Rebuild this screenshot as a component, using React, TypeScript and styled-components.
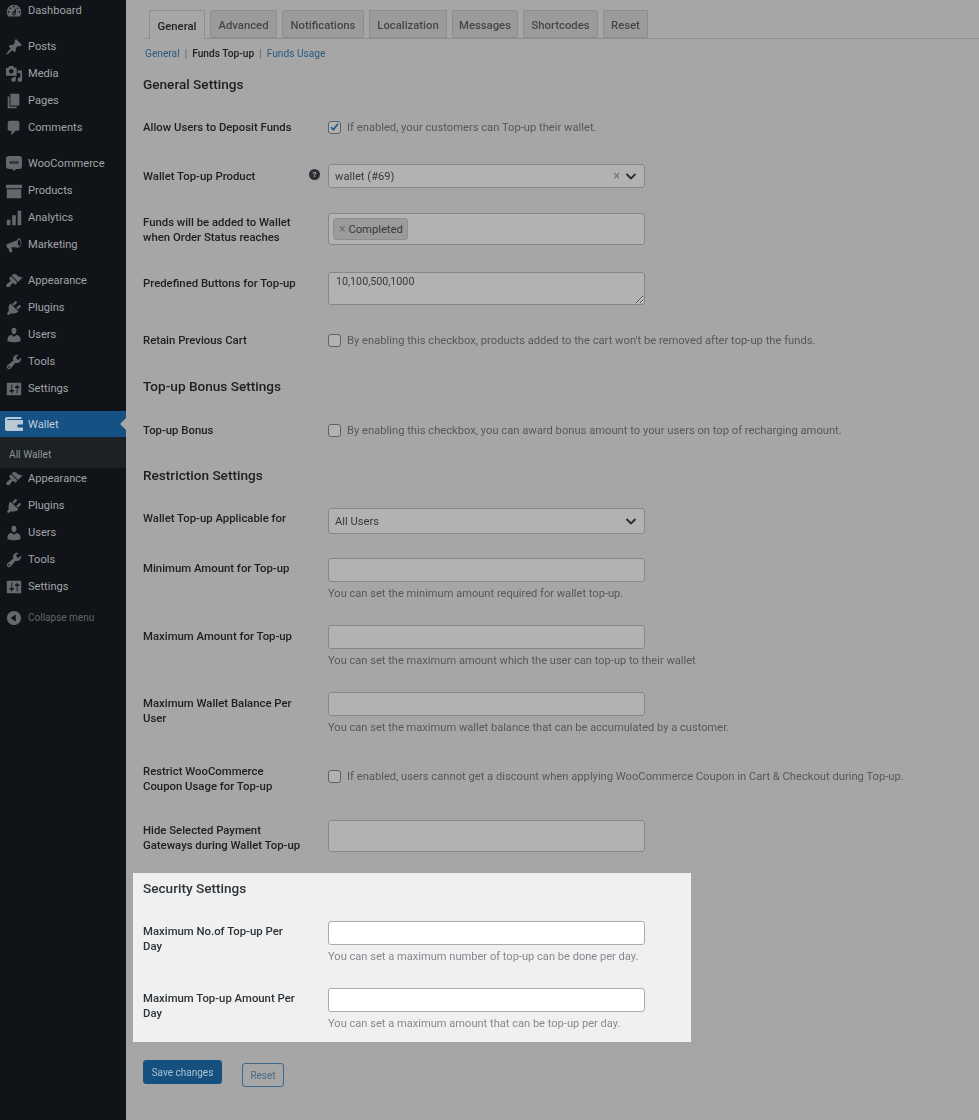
import React from "react";
import styled, { createGlobalStyle } from "styled-components";

const Global = createGlobalStyle`
  html, body { margin: 0; padding: 0; background: #a6a6a6; }
  body { font-family: Roboto, "Noto Sans", sans-serif; font-size: 12px; }
  * { box-sizing: border-box; }
`;

const Shell = styled.div`
  display: flex;
  width: 979px;
  height: 1120px;
  overflow: hidden;
  filter: blur(0.35px);
`;

const Sidebar = styled.nav`
  width: 126px;
  flex: none;
  background: #101317;
  overflow: hidden;
`;

const MenuList = styled.ul`
  list-style: none;
  margin: -3px 0 0;
  padding: 0;
`;

const Item = styled.li<{ $gap?: boolean; $active?: boolean }>`
  position: relative;
  display: flex;
  align-items: center;
  gap: 5px;
  height: ${(p) => (p.$active ? 26 : 27)}px;
  margin-top: ${(p) => (p.$gap ? 9 : 0)}px;
  padding-left: 5px;
  color: ${(p) => (p.$active ? "#c2d0da" : "#a0a4a8")};
  background: ${(p) => (p.$active ? "#155184" : "transparent")};
  font-size: 11.1px;
  white-space: nowrap;
`;

const Notch = styled.span`
  position: absolute;
  right: 0;
  top: 7px;
  width: 0;
  height: 0;
  border: 6px solid transparent;
  border-left-width: 0;
  border-right-color: #a6a6a6;
`;

const IconBox = styled.svg<{ $light?: boolean }>`
  width: ${(p) => (p.$light ? 20 : 18)}px;
  height: ${(p) => (p.$light ? 20 : 18)}px;
  margin: ${(p) => (p.$light ? "0 -1px" : "0")};
  flex: none;
  fill: ${(p) => (p.$light ? "#b9c8d4" : "#64686c")};
`;

const Submenu = styled.div`
  height: 31px;
  margin-bottom: -3px;
  padding: 3px 0 0 9px;
  display: flex;
  align-items: center;
  background: #1b2125;
  color: #8f9498;
  font-size: 10.2px;
`;

const Collapse = styled(Item)`
  color: #62666a;
  font-size: 10px;
  margin-top: 4px;
`;

const WooIcon = styled.span`
  position: relative;
  width: 16px;
  height: 13px;
  margin: -2px 1px 0;
  border-radius: 3px;
  background: #64686c;
  color: #14171a;
  font-size: 5px;
  font-weight: 700;
  line-height: 13px;
  text-align: center;
  flex: none;
  &::after {
    content: "";
    position: absolute;
    left: 6px;
    bottom: -2px;
    border: 2px solid transparent;
    border-bottom-width: 0;
    border-top-color: #64686c;
  }
`;

const Main = styled.main`
  flex: 1;
  min-width: 0;
  padding: 10px 0 0 17px;
  --text: #1c1e20;
  --muted: #55585c;
  --field: #b2b2b2;
  --line: #84878b;
  --value: #36393d;
`;

const Tabs = styled.div`
  display: flex;
  gap: 5px;
  padding-left: 6px;
  height: 29px;
  border-bottom: 1px solid #8e8e8e;
`;

const Tab = styled.div<{ $active?: boolean; $w: number }>`
  width: ${(p) => p.$w}px;
  height: ${(p) => (p.$active ? 29 : 28)}px;
  display: flex;
  align-items: center;
  justify-content: center;
  padding-top: 2px;
  border: 1px solid #8e8e8e;
  border-bottom: ${(p) => (p.$active ? "none" : "1px solid #8e8e8e")};
  background: ${(p) => (p.$active ? "#a6a6a6" : "#9b9b9b")};
  color: ${(p) => (p.$active ? "#1c1e20" : "#44474a")};
  font-size: 11.3px;
  font-weight: 500;
`;

const SubNav = styled.div`
  display: flex;
  gap: 5px;
  height: 18px;
  margin-top: 5px;
  padding-left: 2px;
  align-items: center;
  font-size: 10.2px;
  color: #5c5f63;
`;

const NavLink = styled.span<{ $current?: boolean }>`
  color: ${(p) => (p.$current ? "#1c1e20" : "#2b5a80")};
  font-weight: ${(p) => (p.$current ? 500 : 400)};
`;

const Heading = styled.h2<{ $top: number }>`
  margin: ${(p) => p.$top}px 0 0;
  height: 20px;
  line-height: 19px;
  font-size: 13.6px;
  font-weight: 500;
  color: var(--text);
`;

const Row = styled.div<{ $top: number }>`
  display: grid;
  grid-template-columns: 185px 317px;
  margin-top: ${(p) => p.$top}px;
`;

const Label = styled.label<{ $pad?: number }>`
  position: relative;
  padding-top: ${(p) => p.$pad ?? 4}px;
  padding-right: 26px;
  font-size: 11.35px;
  line-height: 15px;
  font-weight: 500;
  color: var(--text);
`;

const Help = styled.span`
  position: absolute;
  right: 8px;
  top: 5px;
  width: 11px;
  height: 11px;
  border-radius: 50%;
  background: #2c2f33;
  color: #b2b2b2;
  font-size: 8px;
  font-weight: 700;
  line-height: 11px;
  text-align: center;
`;

const CheckLine = styled.div<{ $drop?: number }>`
  display: flex;
  align-items: center;
  gap: 6px;
  height: 20px;
  margin-top: ${(p) => p.$drop ?? 0}px;
  color: var(--muted);
  font-size: 11.2px;
  white-space: nowrap;
`;

const Box = styled.span`
  width: 13px;
  height: 13px;
  flex: none;
  border: 1px solid #5e6266;
  border-radius: 3px;
  background: var(--field);
  display: flex;
  align-items: center;
  justify-content: center;
`;

const Field = styled.div<{ $h: number }>`
  height: ${(p) => p.$h}px;
  display: flex;
  align-items: center;
  gap: 4px;
  padding: 0 6px;
  border: 1px solid var(--line);
  border-radius: 3px;
  background: var(--field);
  color: var(--value);
  font-size: 11.2px;
`;

const Value = styled.span`
  flex: 1;
`;

const ClearMark = styled.span`
  color: #6b6e72;
  font-size: 12px;
  line-height: 1;
`;

const Token = styled.span`
  display: flex;
  align-items: center;
  gap: 3px;
  height: 22px;
  margin-left: -2px;
  padding: 0 4px 0 5px;
  border: 1px solid #8c8f92;
  border-radius: 3px;
  background: #9b9b9b;
  color: var(--value);
  font-size: 11.2px;
`;

const TextInput = styled.input`
  display: block;
  width: 100%;
  height: 24px;
  padding: 0 7px;
  border: 1px solid var(--line);
  border-radius: 3px;
  background: var(--field);
  font: inherit;
  font-size: 11.2px;
  color: var(--value);
  outline: none;
`;

const TextArea = styled.textarea`
  display: block;
  width: 100%;
  height: 33px;
  padding: 1px 7px 0;
  border: 1px solid var(--line);
  border-radius: 3px;
  background: var(--field);
  font: inherit;
  font-size: 10.7px;
  line-height: 16px;
  color: var(--value);
  outline: none;
`;

const Desc = styled.p`
  margin: 3px 0 0;
  height: 18px;
  line-height: 18px;
  font-size: 11.1px;
  color: var(--muted);
  white-space: nowrap;
`;

const Highlight = styled.section`
  width: 558px;
  height: 169px;
  margin: 20px 0 0 -10px;
  padding: 6px 0 0 10px;
  background: #f0f0f1;
  --text: #2c3338;
  --muted: #85898e;
  --field: #ffffff;
  --line: #a9abae;
  --value: #2c3338;
`;

const Actions = styled.div`
  display: flex;
  align-items: flex-start;
  gap: 20px;
  margin-top: 18px;
`;

const SaveButton = styled.button`
  width: 79px;
  height: 24px;
  padding: 0;
  border: 1px solid #16507e;
  border-radius: 3px;
  background: #16507e;
  color: #a9c1d3;
  font: inherit;
  font-size: 10px;
`;

const ResetButton = styled.button`
  width: 42px;
  height: 24px;
  margin-top: 3px;
  padding: 0;
  border: 1px solid #3d6a8c;
  border-radius: 3px;
  background: transparent;
  color: #486a85;
  font: inherit;
  font-size: 10px;
`;

const D = {
  dashboard: "M3.76 16h12.48c1.1-1.37 1.76-3.11 1.76-5 0-4.42-3.58-8-8-8s-8 3.58-8 8c0 1.89.66 3.63 1.76 5zM10 4c.55 0 1 .45 1 1s-.45 1-1 1-1-.45-1-1 .45-1 1-1zM6 6c.55 0 1 .45 1 1s-.45 1-1 1-1-.45-1-1 .45-1 1-1zm8 0c.55 0 1 .45 1 1s-.45 1-1 1-1-.45-1-1 .45-1 1-1zm-5.37 5.55L12 7v6c0 1.1-.9 2-2 2s-2-.9-2-2c0-.57.24-1.08.63-1.45zM4 10c.55 0 1 .45 1 1s-.45 1-1 1-1-.45-1-1 .45-1 1-1zm12 0c.55 0 1 .45 1 1s-.45 1-1 1-1-.45-1-1 .45-1 1-1zm-5 3c0-.55-.45-1-1-1s-1 .45-1 1 .45 1 1 1 1-.45 1-1z",
  post: "M10.44 3.02l1.82-1.82 6.36 6.35-1.83 1.82c-1.05-.68-2.48-.57-3.41.36l-.75.75c-.92.93-1.04 2.35-.35 3.41l-1.83 1.82-2.41-2.41-2.8 2.79c-.42.42-3.38 2.71-3.8 2.29s1.86-3.39 2.28-3.81l2.79-2.79L4.1 9.36l1.83-1.82c1.05.69 2.48.57 3.4-.36l.75-.75c.93-.92 1.05-2.35.36-3.41z",
  media: "M13 11V4c0-.55-.45-1-1-1h-1.67L9 1H5L3.67 3H2c-.55 0-1 .45-1 1v7c0 .55.45 1 1 1h10c.55 0 1-.45 1-1zM7 4.5c1.38 0 2.5 1.12 2.5 2.5S8.38 9.5 7 9.5 4.5 8.38 4.5 7 5.62 4.5 7 4.5zM14 6h5v10.5c0 1.38-1.12 2.5-2.5 2.5S14 17.88 14 16.5s1.12-2.5 2.5-2.5c.17 0 .34.02.5.05V9h-3V6zm-4 8.05V13h2v3.5c0 1.38-1.12 2.5-2.5 2.5S7 17.88 7 16.5 8.12 14 9.5 14c.17 0 .34.02.5.05z",
  page: "M6 15V2h10v13H6zm-1 1h8v2H3V5h2v11z",
  comment: "M5 2h9c1.1 0 2 .9 2 2v7c0 1.1-.9 2-2 2h-2l-5 5v-5H5c-1.1 0-2-.9-2-2V4c0-1.1.9-2 2-2z",
  products: "M19 3H1v4h18V3zM2 8h16v10H2V8zm4 3h8v2H6v-2z",
  analytics: "M18 18V2h-4v16h4zm-6 0V7H8v11h4zm-6 0v-6H2v6h4z",
  marketing: "M16 2.5c1.7 1 2.6 3.6 2.2 6.3-.3 2-1.5 3.5-2.9 4L14 13l-1-.1c-1.8-.6-4.3-.6-6 0l1.2 4.1c.1.4-.1.8-.5.9l-1.7.5c-.4.1-.8-.1-.9-.5L3.6 13.2l-1 .3-1.2-4 12-4.8C13.8 3.4 15 2 16 2.5zm-.4 2c-.9.1-1.5 1.7-1.3 3.5.2 1.8 1 3.2 1.9 3 .9-.1 1.5-1.7 1.3-3.5-.2-1.8-1-3.1-1.9-3z",
  appearance: "M14.48 11.06L7.41 3.99l1.5-1.5c.5-.56 2.3-.47 3.51.32 1.21.8 1.43 1.28 2.91 2.1 1.18.64 2.45 1.26 4.45.85zm-.71.71L6.7 4.7 4.93 6.47c-.39.39-.39 1.02 0 1.41l1.06 1.06c.39.39.39 1.03 0 1.42-.6.6-1.43 1.11-2.21 1.69-.35.26-.7.53-1.01.84C1.43 13.71.96 15.42 1.91 16.36c.95.95 2.66.47 3.67-.55.31-.31.58-.66.85-1.01.58-.78 1.09-1.61 1.69-2.21.39-.39 1.02-.39 1.41 0l1.06 1.06c.39.39 1.02.39 1.41 0z",
  plugins: "M13.11 4.36L9.87 7.6 8 5.73l3.24-3.24c.35-.34 1.05-.2 1.56.32.52.51.66 1.21.31 1.55zm-8 1.77l.91-1.12 9.01 9.01-1.19.84c-.71.71-2.63 1.16-3.82 1.16H6.14L4.9 17.26c-.59.59-1.54.59-2.12 0-.59-.58-.59-1.53 0-2.12l1.24-1.24v-3.88c0-1.13.4-3.19 1.09-3.89zm7.26 3.97l3.24-3.24c.34-.35 1.04-.21 1.55.31.52.51.66 1.21.31 1.55l-3.24 3.25z",
  users: "M10 9.25c-2.27 0-2.73-3.44-2.73-3.44C7 4.02 7.82 2 9.97 2c2.16 0 2.98 2.02 2.71 3.81 0 0-.41 3.44-2.68 3.44zm0 2.57L12.72 10c2.39 0 4.52 2.33 4.52 4.53v2.49s-3.65 1.13-7.24 1.13c-3.65 0-7.24-1.13-7.24-1.13v-2.49c0-2.25 1.94-4.48 4.47-4.48z",
  tools: "M16.68 9.77c-1.34 1.34-3.3 1.67-4.95.99l-5.41 6.52c-.99.99-2.59.99-3.58 0s-.99-2.59 0-3.57l6.52-5.42c-.68-1.65-.35-3.61.99-4.95 1.28-1.28 3.12-1.62 4.72-1.06l-2.89 2.89 2.82 2.82 2.86-2.87c.53 1.58.18 3.39-1.08 4.65zM3.81 16.21c.4.39 1.04.39 1.43 0 .4-.4.4-1.04 0-1.43-.39-.4-1.03-.4-1.43 0-.39.39-.39 1.03 0 1.43z",
  settings: "M18 16V4c0-.55-.45-1-1-1H3c-.55 0-1 .45-1 1v12c0 .55.45 1 1 1h14c.55 0 1-.45 1-1zM8 11h1c.55 0 1 .45 1 1s-.45 1-1 1H8v1.5c0 .28-.22.5-.5.5s-.5-.22-.5-.5V13H6c-.55 0-1-.45-1-1s.45-1 1-1h1V5.5c0-.28.22-.5.5-.5s.5.22.5.5V11zm5-2h-1c-.55 0-1-.45-1-1s.45-1 1-1h1V5.5c0-.28.22-.5.5-.5s.5.22.5.5V7h1c.55 0 1 .45 1 1s-.45 1-1 1h-1v5.5c0 .28-.22.5-.5.5s-.5-.22-.5-.5V9z",
  wallet: "M3 3h13.5c.6 0 1 .4 1 1v1H3.5c-.5 0-.5.9 0 .9H18c.6 0 1 .4 1 1V16c0 .6-.4 1-1 1H3c-1.1 0-2-.9-2-2V5c0-1.1.9-2 2-2zm11 7.5c-.3 0-.5.2-.5.5v2c0 .3.2.5.5.5h5v-3h-5z",
  collapse: "M10 2.16c4.33 0 7.84 3.51 7.84 7.84s-3.51 7.84-7.84 7.84S2.16 14.33 2.16 10 5.71 2.16 10 2.16zm2 11.72V6.12L6.18 9.97z",
};

const Icon = ({ d, light }: { d: string; light?: boolean }) => (
  <IconBox viewBox="0 0 20 20" $light={light}>
    <path d={d} />
  </IconBox>
);

const Chevron = () => (
  <svg width="14" height="14" viewBox="0 0 14 14" fill="none" stroke="#2a2d30" strokeWidth="1.8">
    <path d="M2.5 5l4.5 4.5L11.5 5" />
  </svg>
);

const Check = () => (
  <svg width="12" height="12" viewBox="0 0 12 12" fill="none" stroke="#1c5a8a" strokeWidth="1.8">
    <path d="M2.2 6.2l2.6 2.7 5-6.4" />
  </svg>
);

const tabs: [string, number][] = [
  ["General", 56],
  ["Advanced", 67],
  ["Notifications", 82],
  ["Localization", 78],
  ["Messages", 66],
  ["Shortcodes", 75],
  ["Reset", 45],
];

const lowerMenu: [string, string][] = [
  ["Appearance", D.appearance],
  ["Plugins", D.plugins],
  ["Users", D.users],
  ["Tools", D.tools],
  ["Settings", D.settings],
];

export default function App() {
  return (
    <>
      <Global />
      <Shell>
        <Sidebar>
          <MenuList>
            <Item><Icon d={D.dashboard} />Dashboard</Item>
            <Item $gap><Icon d={D.post} />Posts</Item>
            <Item><Icon d={D.media} />Media</Item>
            <Item><Icon d={D.page} />Pages</Item>
            <Item><Icon d={D.comment} />Comments</Item>
            <Item $gap><WooIcon>woo</WooIcon>WooCommerce</Item>
            <Item><Icon d={D.products} />Products</Item>
            <Item><Icon d={D.analytics} />Analytics</Item>
            <Item><Icon d={D.marketing} />Marketing</Item>
            {lowerMenu.map(([name, d], i) => (
              <Item key={name} $gap={i === 0}><Icon d={d} />{name}</Item>
            ))}
            <Item $gap $active><Icon d={D.wallet} light />Wallet<Notch /></Item>
            <Submenu>All Wallet</Submenu>
            {lowerMenu.map(([name, d]) => (
              <Item key={name + "2"}><Icon d={d} />{name}</Item>
            ))}
            <Collapse><Icon d={D.collapse} />Collapse menu</Collapse>
          </MenuList>
        </Sidebar>
        <Main>
          <Tabs>
            {tabs.map(([name, w], i) => (
              <Tab key={name} $w={w} $active={i === 0}>{name}</Tab>
            ))}
          </Tabs>
          <SubNav>
            <NavLink>General</NavLink>|<NavLink $current>Funds Top-up</NavLink>|<NavLink>Funds Usage</NavLink>
          </SubNav>

          <Heading $top={13}>General Settings</Heading>
          <Row $top={22}>
            <Label $pad={3}>Allow Users to Deposit Funds</Label>
            <CheckLine><Box><Check /></Box>If enabled, your customers can Top-up their wallet.</CheckLine>
          </Row>
          <Row $top={27}>
            <Label $pad={5}>Wallet Top-up Product<Help>?</Help></Label>
            <Field $h={24}><Value>wallet (#69)</Value><ClearMark>×</ClearMark><Chevron /></Field>
          </Row>
          <Row $top={25}>
            <Label $pad={2}>Funds will be added to Wallet when Order Status reaches</Label>
            <Field $h={32}><Token><ClearMark>×</ClearMark>Completed</Token></Field>
          </Row>
          <Row $top={27}>
            <Label>Predefined Buttons for Top-up</Label>
            <TextArea readOnly defaultValue="10,100,500,1000" />
          </Row>
          <Row $top={25}>
            <Label $pad={3}>Retain Previous Cart</Label>
            <CheckLine><Box />By enabling this checkbox, products added to the cart won't be removed after top-up the funds.</CheckLine>
          </Row>

          <Heading $top={27}>Top-up Bonus Settings</Heading>
          <Row $top={23}>
            <Label $pad={3}>Top-up Bonus</Label>
            <CheckLine><Box />By enabling this checkbox, you can award bonus amount to your users on top of recharging amount.</CheckLine>
          </Row>

          <Heading $top={26}>Restriction Settings</Heading>
          <Row $top={22}>
            <Label $pad={3}>Wallet Top-up Applicable for</Label>
            <Field $h={26}><Value>All Users</Value><Chevron /></Field>
          </Row>
          <Row $top={24}>
            <Label $pad={3}>Minimum Amount for Top-up</Label>
            <div>
              <TextInput readOnly />
              <Desc>You can set the minimum amount required for wallet top-up.</Desc>
            </div>
          </Row>
          <Row $top={22}>
            <Label>Maximum Amount for Top-up</Label>
            <div>
              <TextInput readOnly />
              <Desc>You can set the maximum amount which the user can top-up to their wallet</Desc>
            </div>
          </Row>
          <Row $top={22}>
            <Label>Maximum Wallet Balance Per User</Label>
            <div>
              <TextInput readOnly />
              <Desc>You can set the maximum wallet balance that can be accumulated by a customer.</Desc>
            </div>
          </Row>
          <Row $top={25}>
            <Label $pad={2}>Restrict WooCommerce Coupon Usage for Top-up</Label>
            <CheckLine $drop={4}>
              <Box />If enabled, users cannot get a discount when applying WooCommerce Coupon in Cart &amp; Checkout during Top-up.
            </CheckLine>
          </Row>
          <Row $top={26}>
            <Label $pad={3}>Hide Selected Payment Gateways during Wallet Top-up</Label>
            <Field $h={32} />
          </Row>

          <Highlight>
            <Heading $top={0}>Security Settings</Heading>
            <Row $top={22}>
              <Label $pad={3}>Maximum No.of Top-up Per Day</Label>
              <div>
                <TextInput readOnly />
                <Desc>You can set a maximum number of top-up can be done per day.</Desc>
              </div>
            </Row>
            <Row $top={22}>
              <Label $pad={3}>Maximum Top-up Amount Per Day</Label>
              <div>
                <TextInput readOnly />
                <Desc>You can set a maximum amount that can be top-up per day.</Desc>
              </div>
            </Row>
          </Highlight>

          <Actions>
            <SaveButton>Save changes</SaveButton>
            <ResetButton>Reset</ResetButton>
          </Actions>
        </Main>
      </Shell>
    </>
  );
}
